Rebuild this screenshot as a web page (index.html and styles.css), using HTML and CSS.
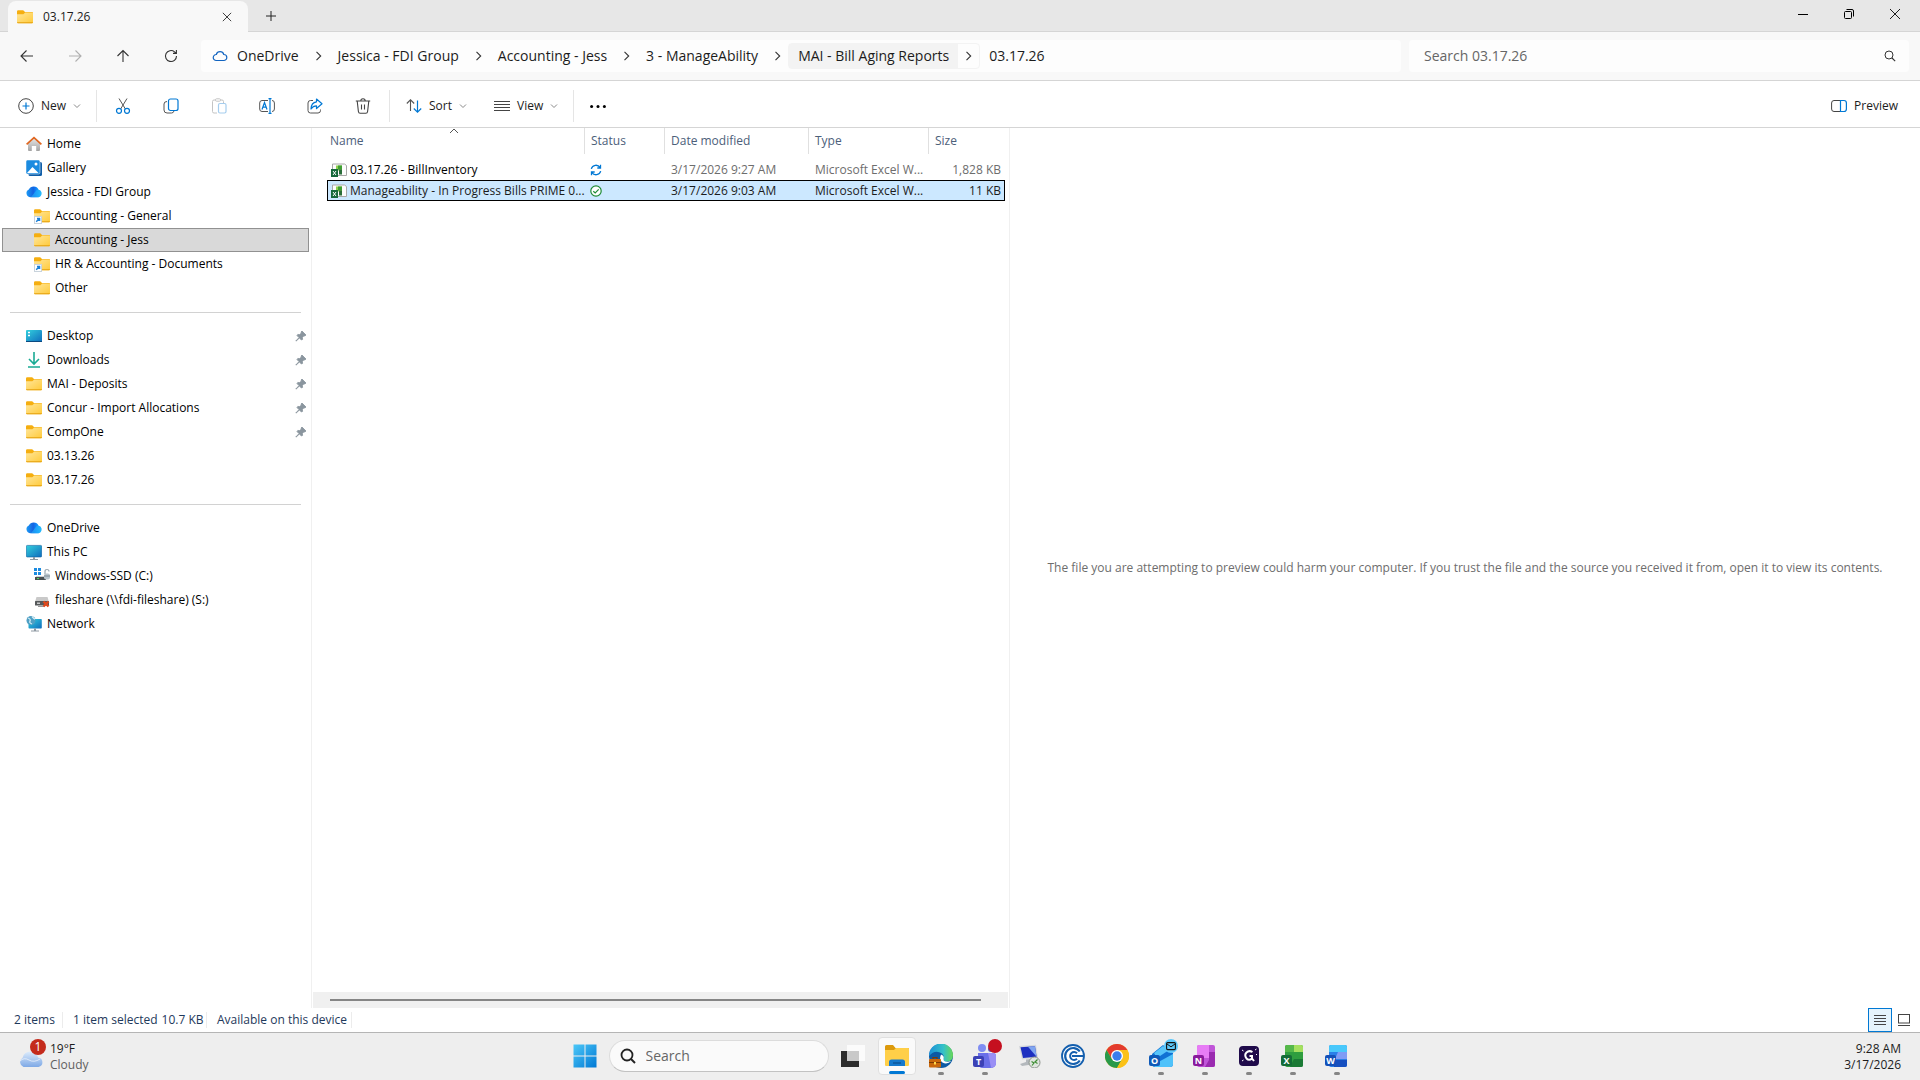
FILE: index.html
```html
<!DOCTYPE html>
<html lang="en">
<head>
<meta charset="UTF-8">
<meta name="viewport" content="width=device-width, initial-scale=1.0">
<title>03.17.26</title>
<link rel="stylesheet" href="styles.css">
</head>
<body>

<!-- shared icons -->
<svg class="sprite" aria-hidden="true">
    <defs>
        <linearGradient id="g-folder" x1="0" y1="0" x2="1" y2="1"><stop offset="0" stop-color="#ffe69b"/><stop offset="1" stop-color="#ffca3a"/></linearGradient>
        <linearGradient id="g-screen" x1="0" y1="0" x2="1" y2="1"><stop offset="0" stop-color="#33d0dd"/><stop offset="1" stop-color="#0f6cbd"/></linearGradient>
        <linearGradient id="g-cloud" x1="0" y1="0" x2="1" y2="0"><stop offset="0" stop-color="#1b9bf5"/><stop offset="0.45" stop-color="#1462e0"/><stop offset="0.6" stop-color="#0f7cf5"/><stop offset="1" stop-color="#2bc4fb"/></linearGradient>
        <linearGradient id="g-win" x1="0" y1="0" x2="1" y2="1"><stop offset="0" stop-color="#4cc8f8"/><stop offset="1" stop-color="#0078d4"/></linearGradient>
        <linearGradient id="g-home" x1="0" y1="0" x2="0" y2="1"><stop offset="0" stop-color="#e8e8e8"/><stop offset="1" stop-color="#a3a3a3"/></linearGradient>
    </defs>
    <symbol id="folder" viewBox="0 0 16 16">
        <path d="M0 2.5Q0 1.3 1.2 1.3H6.2L8 3H15Q16 3 16 4V8H0z" fill="#f5ae10"/>
        <path d="M0 5.2H6.4L8.2 3.4H15.2Q16 3.4 16 4.2V13.4Q16 14.2 15.2 14.2H.8Q0 14.2 0 13.4z" fill="url(#g-folder)"/>
        <path d="M0 13.2Q.2 14.3 1 14.3H15Q15.9 14.3 16 13.2z" fill="#e5a10e"/>
    </symbol>
    <symbol id="folder-link" viewBox="0 0 16 16">
        <use href="#folder" width="16" height="16"/>
        <rect x=".5" y="8.5" width="7" height="7" fill="#fff" stroke="#c9d3dc"/>
        <path d="M2.2 13.8L5.2 10.8M3 10.5H5.6V13" fill="none" stroke="#1a7fd6" stroke-width="1.4"/>
    </symbol>
    <symbol id="cloud" viewBox="0 0 16 16">
        <path d="M4 13.2A4 4 0 0 1 2.8 5.6 5.4 5.4 0 0 1 12.6 5.8 3.8 3.8 0 0 1 12.4 13.2z" fill="url(#g-cloud)"/>
        <path d="M5 13.2L9.6 7.2Q11.2 5.4 13 6A3.7 3.7 0 0 1 12.4 13.2z" fill="#25b6fb" opacity=".6"/>
    </symbol>
    <symbol id="pc" viewBox="0 0 16 16">
        <rect x=".3" y="1.4" width="15.4" height="11.6" rx="1" fill="url(#g-screen)" stroke="#0d609f" stroke-width=".6"/>
        <path d="M7 13H9V15H12V16H4V15H7z" fill="#8f9aa3"/>
    </symbol>
    <symbol id="pin" viewBox="0 0 12 12">
        <path d="M7 1L11 5 9.8 6 9 5.7 7.4 7.5 7.6 9.4 6.4 10 4.4 8 1 11.2.8 11 4 7.6 2 5.6 2.8 4.4 4.6 4.6 6.4 3 6 2z" fill="#8a959e" stroke="#8a959e" stroke-width=".8"/>
    </symbol>
    <symbol id="chev-right" viewBox="0 0 10 10"><path d="M3 .8L7.2 5 3 9.2" fill="none" stroke="#333" stroke-width="1.1"/></symbol>
    <symbol id="chev-down" viewBox="0 0 8 8"><path d="M1 2.5L4 5.5 7 2.5" fill="none" stroke="#8a8a8a"/></symbol>
    <symbol id="excel-file" viewBox="0 0 16 14">
        <path d="M1.500 1H13.500L15.500 2.500V12.500H1.500z" fill="#fdfdfd" stroke="#a8a8a8"/>
        <rect x="5" y="2.500" width="6" height="5" fill="#8fd14f"/>
        <rect x="7" y="2.500" width="4" height="4" fill="#3f9e34"/>
        <rect x="8" y="6.500" width="3" height="5" fill="#2a6e3a"/>
        <rect x="0" y="6" width="7" height="8" fill="#17693c"/>
        <path d="M2 8L5 12M5 8L2 12" stroke="#fff"/>
    </symbol>
    <symbol id="close" viewBox="0 0 12 12"><path d="M1 1L11 11M11 1L1 11" fill="none" stroke="#1c1c1c"/></symbol>
    <symbol id="lens" viewBox="0 0 12 12"><path d="M8 8L11.2 11.2" stroke="#333" stroke-width="1.1"/><circle cx="5" cy="5" r="4" fill="none" stroke="#333"/></symbol>
</svg>

<header class="titlebar">
    <div class="tab">
        <svg class="i16"><use href="#folder"/></svg>
        <span class="tab-title">03.17.26</span>
        <button class="plain tab-close" aria-label="Close tab"><svg class="i10"><use href="#close"/></svg></button>
    </div>
    <button class="plain new-tab" aria-label="New tab"><svg class="i12" viewBox="0 0 12 12"><path d="M6 1V11M1 6H11" stroke="#222"/></svg></button>
    <div class="window-controls">
        <button class="plain" aria-label="Minimize"><svg class="i12" viewBox="0 0 12 12"><path d="M1 6.5H11" stroke="#000"/></svg></button>
        <button class="plain" aria-label="Restore"><svg class="i12" viewBox="0 0 12 12"><path d="M3.5 1.5H9Q10.5 1.5 10.5 3V8.5" fill="none" stroke="#000"/><rect x="1.5" y="3.5" width="7" height="7" rx="1" fill="none" stroke="#000"/></svg></button>
        <button class="plain" aria-label="Close"><svg class="i12"><use href="#close"/></svg></button>
    </div>
</header>

<div class="navbar">
    <div class="nav-buttons">
        <button class="plain" aria-label="Back"><svg class="i14" viewBox="0 0 14 14"><path d="M13 7H1M6.5 1.5L1 7 6.5 12.5" fill="none" stroke="#333" stroke-width="1.1"/></svg></button>
        <button class="plain" aria-label="Forward" disabled><svg class="i14" viewBox="0 0 14 14"><path d="M1 7H13M7.500 1.500L13 7 7.500 12.500" fill="none" stroke="#b0b0b0" stroke-width="1.1"/></svg></button>
        <button class="plain" aria-label="Up"><svg class="i14" viewBox="0 0 14 14"><path d="M7 13V1.500M1.500 7L7 1.500 12.500 7" fill="none" stroke="#333" stroke-width="1.1"/></svg></button>
        <button class="plain" aria-label="Refresh"><svg class="i14" viewBox="0 0 14 14"><path d="M12.500 7A5.500 5.500 0 1 1 10.500 2.800L12.200 4.200M12.400 1V4.400H9" fill="none" stroke="#333" stroke-width="1.1"/></svg></button>
    </div>
    <nav class="breadcrumb" aria-label="Address">
        <svg class="i16" viewBox="0 0 16 16"><path d="M4.200 12.500A3 3 0 0 1 4.300 6.500 3.900 3.900 0 0 1 11.800 6.500 3 3 0 0 1 11.800 12.500z" fill="none" stroke="#1264c0" stroke-width="1.200"/></svg>
        <a href="#">OneDrive</a><svg class="crumb-arrow"><use href="#chev-right"/></svg>
        <a href="#">Jessica - FDI Group</a><svg class="crumb-arrow"><use href="#chev-right"/></svg>
        <a href="#">Accounting - Jess</a><svg class="crumb-arrow"><use href="#chev-right"/></svg>
        <a href="#">3 - ManageAbility</a><svg class="crumb-arrow"><use href="#chev-right"/></svg>
        <span class="crumb-hover"><a href="#">MAI - Bill Aging Reports</a><svg class="crumb-arrow"><use href="#chev-right"/></svg></span>
        <a href="#">03.17.26</a>
    </nav>
    <div class="search-box">
        <input type="text" aria-label="Search 03.17.26" placeholder="Search 03.17.26">
        <svg class="i12"><use href="#lens"/></svg>
    </div>
</div>

<div class="toolbar">
    <button class="tool tool-new">
        <svg class="i16" viewBox="0 0 16 16"><circle cx="8" cy="8" r="7.300" fill="none" stroke="#444"/><path d="M8 4.500V11.500M4.500 8H11.500" stroke="#0078d4" stroke-width="1.200"/></svg>
        New
        <svg class="i8"><use href="#chev-down"/></svg>
    </button>
    <span class="tool-sep"></span>
    <div class="tool-icons">
        <button class="plain" aria-label="Cut"><svg class="i16" viewBox="0 0 16 16"><path d="M4 .5L10.400 11M12 .5L5.600 11" stroke="#555" fill="none"/><circle cx="4" cy="12.800" r="2.500" fill="none" stroke="#0078d4" stroke-width="1.200"/><circle cx="12" cy="12.800" r="2.500" fill="none" stroke="#0078d4" stroke-width="1.200"/></svg></button>
        <button class="plain" aria-label="Copy"><svg class="i16" viewBox="0 0 16 16"><path d="M4 3.500Q1 3.500 1 6V12Q1 15 4 15H8.500Q10.500 15 11 13" fill="none" stroke="#555"/><rect x="5.500" y="1" width="9.500" height="11.500" rx="2" fill="none" stroke="#0078d4" stroke-width="1.200"/></svg></button>
        <button class="plain" aria-label="Paste" disabled><svg class="i16" viewBox="0 0 16 16"><path d="M6 15H3Q1.500 15 1.500 13.500V3.500Q1.500 2 3 2H11Q12.500 2 12.500 3.500V5" fill="none" stroke="#c4c4c4"/><rect x="4.500" y=".8" width="5" height="2.400" rx="1" fill="#fff" stroke="#c4c4c4"/><rect x="7.500" y="5.500" width="7.500" height="9.500" rx="1.500" fill="#fff" stroke="#a5cdee" stroke-width="1.200"/></svg></button>
        <button class="plain" aria-label="Rename"><svg class="i16" viewBox="0 0 16 16"><path d="M9 2.500H3Q.7 2.500.7 5V11Q.7 13.500 3 13.500H9M13 2.500Q15.400 2.500 15.400 5V11Q15.400 13.500 13 13.500" fill="none" stroke="#555"/><path d="M9.500.6H12.500M9.500 15.400H12.500M11 .6V15.400M3 11.500L5.500 4.500 8 11.500M3.800 9.200H7.200" fill="none" stroke="#0078d4" stroke-width="1.200"/></svg></button>
        <button class="plain" aria-label="Share"><svg class="i16" viewBox="0 0 16 16"><path d="M6 2.500H3.500Q1 2.500 1 5V12.500Q1 15 3.500 15H11Q13.500 15 13.500 12.500V11.500" fill="none" stroke="#555"/><path d="M9.500 1L15 5.800 9.500 10.500V7.800Q6 7.800 4 11 4.200 4.500 9.500 3.800z" fill="none" stroke="#0078d4" stroke-width="1.200" stroke-linejoin="round"/></svg></button>
        <button class="plain" aria-label="Delete"><svg class="i16" viewBox="0 0 16 16"><path d="M.8 3H15.200M5.800 3Q5.800.8 8 .8T10.200 3M2.200 3L3.400 13.500Q3.600 15.200 5.200 15.200H10.800Q12.400 15.200 12.600 13.500L13.800 3M6.500 6.500V11.500M9.500 6.500V11.500" fill="none" stroke="#444" stroke-width="1.100"/></svg></button>
    </div>
    <span class="tool-sep"></span>
    <button class="tool tool-sort">
        <svg class="i16" viewBox="0 0 16 16"><path d="M4.500 13V2M.8 5.500L4.500 1.800 8.200 5.500" fill="none" stroke="#555" stroke-width="1.100"/><path d="M11.500 2.500V14M7.800 10.500L11.500 14.200 15.200 10.500" fill="none" stroke="#0078d4" stroke-width="1.200"/></svg>
        Sort
        <svg class="i8"><use href="#chev-down"/></svg>
    </button>
    <button class="tool tool-view">
        <svg class="i16" viewBox="0 0 16 16"><path d="M0 3.500H16M0 6.500H16M0 9.500H16M0 12.500H16" stroke="#444"/></svg>
        View
        <svg class="i8"><use href="#chev-down"/></svg>
    </button>
    <span class="tool-sep"></span>
    <button class="plain tool-more" aria-label="More"><svg class="i16" viewBox="0 0 16 16"><circle cx="1.600" cy="8.500" r="1.500"/><circle cx="8" cy="8.500" r="1.500"/><circle cx="14.400" cy="8.500" r="1.500"/></svg></button>
    <button class="tool tool-preview">
        <svg class="i16" viewBox="0 0 16 16"><path d="M9.500 2.500H3Q.6 2.500.6 5V11Q.6 13.500 3 13.500H9.500" fill="none" stroke="#444"/><path d="M9.500 2.500H13Q15.400 2.500 15.400 5V11Q15.400 13.500 13 13.500H9.500z" fill="none" stroke="#0078d4" stroke-width="1.200"/></svg>
        Preview
    </button>
</div>

<main class="content">
    <nav class="sidebar" aria-label="Folders">
        <a class="side-item" href="#"><svg class="i16" viewBox="0 0 16 16"><path d="M2 7L8 2 14 7V14Q14 15 13 15H10.200V10H5.800V15H3Q2 15 2 14z" fill="url(#g-home)"/><path d="M.6 8.400L8 1.600 15.400 8.400" fill="none" stroke="#e0661f" stroke-width="1.700"/></svg>Home</a>
        <a class="side-item" href="#"><svg class="i16" viewBox="0 0 16 16"><rect x="2.500" y="2" width="13.500" height="14" rx="1.500" fill="#0f5ea8"/><rect x="0" y="0" width="14" height="14" rx="1.500" fill="#1b8be0" stroke="#fff" stroke-width=".5"/><path d="M1 13L6.500 7 12.500 13z" fill="#fff"/><circle cx="10" cy="4" r="1.500" fill="#fff"/></svg>Gallery</a>
        <a class="side-item" href="#"><svg class="i16"><use href="#cloud"/></svg>Jessica - FDI Group</a>
        <a class="side-item child" href="#"><svg class="i16"><use href="#folder-link"/></svg>Accounting - General</a>
        <a class="side-item child selected" href="#"><svg class="i16"><use href="#folder"/></svg>Accounting - Jess</a>
        <a class="side-item child" href="#"><svg class="i16"><use href="#folder-link"/></svg>HR &amp; Accounting - Documents</a>
        <a class="side-item child" href="#"><svg class="i16"><use href="#folder"/></svg>Other</a>
        <hr>
        <a class="side-item" href="#"><svg class="i16" viewBox="0 0 16 16"><rect x="0" y="2" width="16" height="12" rx="1" fill="url(#g-screen)"/><path d="M2 4.500H4M2 7.500H4" stroke="#fff" stroke-width="1.500"/><path d="M0 13H16V14H0z" fill="#0b4a80"/></svg>Desktop<svg class="pin"><use href="#pin"/></svg></a>
        <a class="side-item" href="#"><svg class="i16" viewBox="0 0 16 16"><path d="M8 0V11.500M3 7L8 12 13 7M2 15H14" fill="none" stroke="#1aab94" stroke-width="1.600"/></svg>Downloads<svg class="pin"><use href="#pin"/></svg></a>
        <a class="side-item" href="#"><svg class="i16"><use href="#folder"/></svg>MAI - Deposits<svg class="pin"><use href="#pin"/></svg></a>
        <a class="side-item" href="#"><svg class="i16"><use href="#folder"/></svg>Concur - Import Allocations<svg class="pin"><use href="#pin"/></svg></a>
        <a class="side-item" href="#"><svg class="i16"><use href="#folder"/></svg>CompOne<svg class="pin"><use href="#pin"/></svg></a>
        <a class="side-item" href="#"><svg class="i16"><use href="#folder"/></svg>03.13.26</a>
        <a class="side-item" href="#"><svg class="i16"><use href="#folder"/></svg>03.17.26</a>
        <hr>
        <a class="side-item" href="#"><svg class="i16"><use href="#cloud"/></svg>OneDrive</a>
        <a class="side-item" href="#"><svg class="i16"><use href="#pc"/></svg>This PC</a>
        <a class="side-item child" href="#"><svg class="i16" viewBox="0 0 16 16"><path d="M0 0H3V3H0zM4 0H7V3H4zM0 4H3V7H0zM4 4H7V7H4z" fill="#1c8be0"/><path d="M2 8.500H11L12 12H1z" fill="#9aa0a4"/><rect x="1" y="9" width="11" height="3" fill="#4a4f52"/><rect x="3" y="10" width="2" height="1" fill="#4ddb5a"/><path d="M11 6V3.500Q11 1.500 13 1.500T15 3.500" fill="none" stroke="#9aa7b0" stroke-width="1.200"/><rect x="10" y="5.500" width="6" height="6" rx="2" fill="#b9c4cc"/><path d="M10 8H16" stroke="#7f8c96"/></svg>Windows-SSD (C:)</a>
        <a class="side-item child" href="#"><svg class="i16" viewBox="0 0 16 16"><path d="M2.500 5H13.500L15 10H1z" fill="#c9c9c9"/><rect x="1" y="9" width="14" height="4.500" rx=".5" fill="#55585a"/><rect x="3" y="10.500" width="3" height="1.500" fill="#c9c9c9"/><path d="M4 14.500H10" stroke="#999"/><path d="M9.500 9.500L14.500 14.500M14.500 9.500L9.500 14.500" stroke="#e0481c" stroke-width="2.400"/></svg>fileshare (\\fdi-fileshare) (S:)</a>
        <a class="side-item" href="#"><svg class="i16" viewBox="0 0 16 16"><rect x="2.500" y="3" width="13.300" height="9.500" rx=".8" fill="url(#g-screen)"/><path d="M8 12.500H10V14.500H13V15.500H5V14.500H8z" fill="#8f9aa3"/><circle cx="5" cy="4.500" r="4.500" fill="#4f9fc4"/><path d="M2 2Q5 3 4 5T6 8M6 .5Q8 3 9 3" fill="none" stroke="#d3edf5" stroke-width="1.300"/></svg>Network</a>
    </nav>

    <section class="files">
        <table>
            <colgroup><col class="c-name"><col class="c-status"><col class="c-date"><col class="c-type"><col></colgroup>
            <thead>
                <tr>
                    <th>Name<svg class="sort-mark" viewBox="0 0 10 6"><path d="M1 5L5 1 9 5" fill="none" stroke="#555"/></svg></th>
                    <th>Status</th>
                    <th>Date modified</th>
                    <th>Type</th>
                    <th>Size</th>
                </tr>
            </thead>
            <tbody>
                <tr>
                    <td><span class="file-name"><svg class="file-icon"><use href="#excel-file"/></svg>03.17.26 - BillInventory</span></td>
                    <td class="state"><svg class="i12" viewBox="0 0 12 12"><path d="M1.300 4.800A4.800 4.800 0 0 1 10 3.500M10.500.8V4H7.300M10.700 7.200A4.800 4.800 0 0 1 2 8.500M1.500 11.200V8H4.700" fill="none" stroke="#0078d4" stroke-width="1.300"/></svg></td>
                    <td>3/17/2026 9:27 AM</td>
                    <td>Microsoft Excel W...</td>
                    <td class="size">1,828 KB</td>
                </tr>
                <tr class="selected">
                    <td><span class="file-name"><svg class="file-icon"><use href="#excel-file"/></svg>Manageability - In Progress Bills PRIME 0...</span></td>
                    <td class="state"><svg class="i12" viewBox="0 0 12 12"><circle cx="6" cy="6" r="5.200" fill="#fff" stroke="#1f8b34" stroke-width="1.200"/><path d="M3.300 6.200L5.200 8 8.700 4.400" fill="none" stroke="#1f8b34" stroke-width="1.200"/></svg></td>
                    <td>3/17/2026 9:03 AM</td>
                    <td>Microsoft Excel W...</td>
                    <td class="size">11 KB</td>
                </tr>
            </tbody>
        </table>
        <div class="scrollbar"><div class="scroll-thumb"></div></div>
    </section>

    <section class="preview">
        <p>The file you are attempting to preview could harm your computer. If you trust the file and the source you received it from, open it to view its contents.</p>
    </section>
</main>

<footer class="statusbar">
    <span class="status-count">2 items</span>
    <span class="status-selected">1 item selected<span>10.7 KB</span></span>
    <span class="status-device">Available on this device</span>
    <div class="view-buttons">
        <button class="plain active" aria-label="Details view"><svg class="i12" viewBox="0 0 12 12"><path d="M0 1.500H12M0 4.500H12M0 7.500H12M0 10.500H12" stroke="#444"/></svg></button>
        <button class="plain" aria-label="Large icons view"><svg class="i12" viewBox="0 0 12 12"><rect x=".5" y=".5" width="11" height="8.500" fill="none" stroke="#444"/><path d="M0 11.500H12" stroke="#444"/></svg></button>
    </div>
</footer>

<div class="taskbar">
    <button class="weather">
        <svg class="weather-icon" viewBox="0 0 28 26"><defs><linearGradient id="g-weather" x1="0" y1="0" x2="0" y2="1"><stop offset="0" stop-color="#dcebfb"/><stop offset="1" stop-color="#7ea9e6"/></linearGradient></defs><path d="M5.500 23A5 5 0 0 1 4.500 14Q6 7.500 12.500 7.500T20 13.500A4.800 4.800 0 0 1 20.500 23z" fill="url(#g-weather)"/><path d="M2 17Q6 13 11 16T22 15" fill="none" stroke="#fff" opacity=".6"/></svg>
        <span class="badge">1</span>
        <span class="weather-text">19°F<small>Cloudy</small></span>
    </button>

    <div class="apps">
        <button class="app" aria-label="Start"><svg class="i24" viewBox="0 0 24 24"><path d="M.5.500H11.500V11.500H.5zM12.500.500H23.500V11.500H12.500zM.5 12.500H11.500V23.500H.5zM12.500 12.500H23.500V23.500H12.500z" fill="url(#g-win)"/></svg></button>
        <label class="task-search">
            <svg class="i16" viewBox="0 0 16 16"><circle cx="7" cy="7" r="5.500" fill="none" stroke="#222" stroke-width="1.800"/><path d="M11 11L15 15" stroke="#222" stroke-width="2"/></svg>
            <input type="text" aria-label="Search" placeholder="Search">
        </label>
        <button class="app" aria-label="Task view"><svg class="i24" viewBox="0 0 24 24"><rect x="0" y="7" width="18" height="16" fill="#2b2b2b"/><rect x="6" y="1" width="18" height="16" fill="#fff" opacity=".75"/></svg></button>
        <button class="app current" aria-label="File Explorer"><svg class="i24" viewBox="0 0 24 24"><path d="M0 2.500Q0 1 1.500 1H8L10.500 4H23Q24 4 24 5V10H0z" fill="#dc9a0c"/><path d="M0 6H9L11 4H23Q24 4 24 5V21Q24 22 23 22H1Q0 22 0 21z" fill="#ffcf48"/><path d="M4 22V18Q4 15.500 6.500 15.500H17.500Q20 15.500 20 18V22z" fill="#1579cc"/><path d="M8 19H16" stroke="#0c5596" stroke-width="1.400"/></svg></button>
        <button class="app open" aria-label="Edge"><svg class="i24" viewBox="0 0 24 24"><defs><linearGradient id="g-edge" x1="0" y1="0" x2="1" y2="0"><stop offset="0" stop-color="#1b8fd8"/><stop offset=".6" stop-color="#35c1c8"/><stop offset="1" stop-color="#6ad955"/></linearGradient></defs><circle cx="12" cy="12" r="12" fill="#0c59a4"/><path d="M0 12A12 12 0 0 1 24 11Q24 17 18 17.500 13.500 17.500 14.500 14.500 15.500 12 13 9.500 6 5 0 12z" fill="url(#g-edge)"/><path d="M14.600 14.500Q14 18 19 17.700L22.500 17Q18 21 13.500 18.500 9.500 16 12 10.500 15.500 12 14.600 14.500z" fill="#fff"/><rect x="0" y="15" width="12" height="8.500" rx="1" fill="#c9680c"/><path d="M4 15V13.500H8V15M0 18.500H12" fill="none" stroke="#7a3a05" stroke-width="1.200"/><rect x="5" y="18" width="2" height="2.500" fill="#ffd84a"/></svg></button>
        <button class="app open" aria-label="Teams"><svg class="i24" viewBox="0 0 24 24"><circle cx="9" cy="4" r="4" fill="#7f8df2"/><circle cx="18" cy="5" r="3" fill="#5059c9"/><path d="M5 9H20Q23 9 23 12V19Q23 24 17 24H10Q5 24 5 18z" fill="#6a6fe8"/><path d="M15 9H20Q23 9 23 12V19Q23 23 18 23.800z" fill="#9a8ff5"/><rect x="0" y="12" width="11" height="11" rx="2" fill="#3b41b5"/><text x="5.500" y="21" class="glyph">T</text></svg><span class="dot-badge"></span></button>
        <button class="app" aria-label="Remote Desktop"><svg class="i24" viewBox="0 0 24 24"><path d="M2 2L19 .800 21 14 5 15.500z" fill="#d5d8db"/><path d="M3.500 3.200L18 2.200 19.600 12.800 6 14z" fill="#1c2fc0"/><path d="M11 2.700L18 2.200 19.600 12.800z" fill="#7fa5f0"/><path d="M9 15.500L14 15V18L18 20 5 22 3 20 9 18z" fill="#b3b8bc"/><circle cx="17.500" cy="18.500" r="5.500" fill="#dfe5df" stroke="#8c938c"/><path d="M14.500 17.500L17 19 15 21.500M20.500 15.500L18 18 20.500 19.500" fill="none" stroke="#3e8f34" stroke-width="1.200"/></svg></button>
        <button class="app" aria-label="CompOne"><svg class="i24" viewBox="0 0 24 24"><circle cx="12" cy="12" r="11" fill="#fff" stroke="#145fae" stroke-width="1.800"/><path d="M18.800 7.500A8 8 0 1 0 18.800 16.500" fill="none" stroke="#145fae" stroke-width="2.200"/><path d="M23 12H11M16 9.200A4 4 0 1 0 16 14.800" fill="none" stroke="#145fae" stroke-width="2"/></svg></button>
        <button class="app" aria-label="Chrome"><svg class="i24" viewBox="0 0 24 24"><circle cx="12" cy="12" r="12" fill="#fbc117"/><path d="M1.600 6A12 12 0 0 1 22.400 6H12L6.800 15z" fill="#e33b2e"/><path d="M1.600 6A12 12 0 0 0 12 24L17.200 15 12 17 6.800 15z" fill="#28994a"/><path d="M12 6H22.400A12 12 0 0 1 12 24L17.200 15z" fill="#fbc117"/><circle cx="12" cy="12" r="6" fill="#fff"/><circle cx="12" cy="12" r="4.700" fill="#3b7ded"/></svg></button>
        <button class="app open" aria-label="Outlook"><svg class="i24" viewBox="0 0 24 24"><path d="M3 10L14 1 24 9V20Q24 23 21 23H6Q3 23 3 20z" fill="#1172d4"/><path d="M5 9L14 2 20 6 8 14z" fill="#58c5fa"/><path d="M4 21L24 10V20Q24 23 21 23H6z" fill="#4fc2fa"/><rect x="0" y="11" width="11" height="11" rx="2" fill="#0f5ab8"/><text x="5.500" y="20" class="glyph">O</text></svg><span class="mail-badge"><svg class="i10" viewBox="0 0 10 10"><rect x=".6" y="1.600" width="8.800" height="7" rx="1" fill="none" stroke="#111" stroke-width="1.100"/><path d="M1 3L5 5.800 9 3" fill="none" stroke="#111"/></svg></span></button>
        <button class="app open" aria-label="OneNote"><svg class="i24" viewBox="0 0 24 24"><rect x="4" y="1" width="18" height="22" rx="2" fill="#c055d8"/><path d="M4 3Q4 1 6 1H16V14H4z" fill="#e77cf5"/><path d="M16 8H22V21Q22 23 20 23H12L16 16z" fill="#9a2bb0"/><rect x="0" y="11" width="11" height="11" rx="2" fill="#8a1a9c"/><text x="5.500" y="20" class="glyph">N</text></svg></button>
        <button class="app open" aria-label="G app"><svg class="i24" viewBox="0 0 24 24"><rect x="2" y="2" width="20" height="20" rx="4" fill="#1f0a4a"/><path d="M15.500 8Q12 6 9.500 8.500T9.500 14.500Q12 17 15 14.500V12H12.500M15 14.500L17 17" fill="none" stroke="#fff" stroke-width="2"/><path d="M5 6L6.500 7M18 6L19.500 5M5 17L6.500 16M19 10.500H20" stroke="#fff"/></svg></button>
        <button class="app open" aria-label="Excel"><svg class="i24" viewBox="0 0 24 24"><rect x="4" y="1" width="18" height="22" rx="2" fill="#2f9e3f"/><path d="M4 3Q4 1 6 1H13V8H4z" fill="#55b84a"/><path d="M13 1H20Q22 1 22 3V8H13z" fill="#a5e05f"/><path d="M13 15H22V21Q22 23 20 23H9z" fill="#1b7a35"/><rect x="0" y="11" width="11" height="11" rx="2" fill="#146c37"/><text x="5.500" y="20" class="glyph">X</text></svg></button>
        <button class="app open" aria-label="Word"><svg class="i24" viewBox="0 0 24 24"><rect x="4" y="1" width="18" height="22" rx="2" fill="#2a7fe8"/><path d="M4 3Q4 1 6 1H20Q22 1 22 3V8H4z" fill="#49c8fb"/><path d="M13 8H22V15H10z" fill="#7f9cf5"/><path d="M9 16H22V21Q22 23 20 23H9z" fill="#164fc0"/><rect x="0" y="11" width="11" height="11" rx="2" fill="#1450b8"/><text x="5.500" y="20" class="glyph">W</text></svg></button>
    </div>

    <div class="clock"><span>9:28 AM</span><span>3/17/2026</span></div>
</div>

</body>
</html>
```

FILE: styles.css
```css
* {
    box-sizing: border-box;
}

body {
    margin: 0;
    min-height: 100vh;
    display: flex;
    flex-direction: column;
    font-family: "Open Sans", "Noto Sans", sans-serif;
    font-size: 12px;
    line-height: 16px;
    color: #1c1c1c;
    background: #fff;
}

a {
    color: inherit;
    text-decoration: none;
}

button, input {
    font: inherit;
    color: inherit;
}

button {
    border: none;
    background: none;
    padding: 0;
}

svg {
    display: block;
    flex: none;
}

.sprite {
    position: absolute;
    width: 0;
    height: 0;
}

.i8 { width: 8px; height: 8px; }
.i10 { width: 10px; height: 10px; }
.i12 { width: 12px; height: 12px; }
.i14 { width: 14px; height: 14px; }
.i16 { width: 16px; height: 16px; }
.i24 { width: 24px; height: 24px; }

.plain {
    display: flex;
    align-items: center;
    justify-content: center;
}

/* title bar */
.titlebar {
    display: flex;
    height: 32px;
    padding-left: 8px;
    background: #e7e7e7;
    border-bottom: 1px solid #d5d5d5;
}

.tab {
    display: flex;
    align-items: center;
    width: 240px;
    height: 31px;
    margin-top: 1px;
    padding: 0 11px 0 9px;
    background: #f8f8f8;
    border-radius: 8px 8px 0 0;
}

.tab-title {
    margin-left: 10px;
}

.tab-close {
    width: 20px;
    height: 20px;
    margin-left: auto;
}

.new-tab {
    width: 46px;
}

.window-controls {
    display: flex;
    margin-left: auto;
    padding-right: 2px;
}

.window-controls button {
    width: 46px;
    height: 28px;
}

/* address row */
.navbar {
    display: flex;
    align-items: center;
    height: 49px;
    padding-right: 11px;
    background: #f8f8f8;
    border-bottom: 1px solid #d5d5d5;
    font-size: 14px;
}

.nav-buttons {
    display: flex;
    width: 201px;
    padding-left: 3px;
}

.nav-buttons button {
    width: 48px;
    height: 32px;
}

.breadcrumb {
    flex: 1;
    display: flex;
    align-items: center;
    height: 32px;
    padding-left: 11px;
    background: #fdfdfd;
    border-radius: 4px;
}

.breadcrumb a {
    padding: 4px 9px;
}

.crumb-arrow {
    width: 21px;
    height: 10px;
}

.crumb-hover {
    display: flex;
    align-items: center;
    border: 1px solid #f3f3f3;
    border-radius: 4px;
}

.crumb-hover a {
    background: #f3f3f3;
}

.search-box {
    display: flex;
    align-items: center;
    width: 500px;
    height: 32px;
    margin-left: 8px;
    padding: 0 13px 0 15px;
    background: #fdfdfd;
    border-radius: 4px;
}

.search-box input {
    flex: 1;
    min-width: 0;
    padding: 0;
    border: none;
    outline: none;
    background: none;
}

input::placeholder {
    color: #666;
    opacity: 1;
}

/* command bar */
.toolbar {
    display: flex;
    align-items: center;
    height: 47px;
    padding: 3px 22px 0 18px;
    border-bottom: 1px solid #d5d5d5;
}

.tool {
    display: flex;
    align-items: center;
    gap: 7px;
}

.tool-new {
    width: 78px;
}

.tool-sep {
    width: 1px;
    height: 32px;
    background: #e5e5e5;
}

.tool-icons {
    display: flex;
    padding: 0 2px;
}

.tool-icons button {
    width: 48px;
    height: 32px;
}

.tool-sort {
    width: 104px;
    padding-left: 16px;
}

.tool-view {
    width: 79px;
}

.tool-more {
    width: 48px;
    height: 32px;
}

.tool-preview {
    margin-left: auto;
}

/* main area */
.content {
    flex: 1;
    display: flex;
}

.sidebar {
    width: 312px;
    padding: 4px 2px;
    border-right: 1px solid #f0f0f0;
}

.side-item {
    display: flex;
    align-items: center;
    gap: 5px;
    height: 24px;
    padding-left: 23px;
    padding-right: 1px;
    border: 1px solid transparent;
    color: #000;
}

.side-item.child {
    padding-left: 31px;
}

.side-item.selected {
    background: #d9d9d9;
    border-color: #919191;
}

.sidebar hr {
    height: 1px;
    margin: 12px 8px 11px;
    border: none;
    background: #d2d2d2;
}

.pin {
    width: 12px;
    height: 12px;
    margin-left: auto;
}

.files {
    display: flex;
    flex-direction: column;
    width: 698px;
    border-right: 1px solid #f0f0f0;
}

.files table {
    table-layout: fixed;
    width: 678px;
    margin-left: 15px;
    border-spacing: 0;
}

.c-name { width: 258px; }
.c-status { width: 80px; }
.c-date { width: 144px; }
.c-type { width: 120px; }

.files th {
    position: relative;
    height: 26px;
    padding: 0 6px;
    border-right: 1px solid #e0e0e0;
    text-align: left;
    font-weight: normal;
    color: #4c607a;
}

.files th:first-child {
    padding-left: 3px;
}

.files th:last-child {
    border-right: none;
}

.sort-mark {
    position: absolute;
    top: 0;
    left: 122px;
    width: 10px;
    height: 6px;
}

.files tbody::before {
    content: "";
    display: block;
    height: 5px;
}

.files td {
    height: 21px;
    padding: 0 4px 0 6px;
    color: #6d6d6d;
    white-space: nowrap;
}

.files td:first-child {
    padding: 0 0 0 4px;
    color: #000;
}

.files td.state {
    padding-left: 5px;
}

.files td.size {
    text-align: right;
}

.files tr.selected {
    background: #cce8ff;
    outline: 1px solid #000;
    outline-offset: -1px;
}

.files tr.selected td {
    color: #1c1c1c;
}

.file-name {
    display: flex;
    align-items: center;
    gap: 3px;
}

.file-icon {
    width: 16px;
    height: 14px;
}

.scrollbar {
    height: 16px;
    margin: auto 1px 0;
    padding: 7px 27px 7px 17px;
    background: #f0f0f0;
}

.scroll-thumb {
    height: 2px;
    background: #858585;
}

.preview {
    flex: 1;
    display: flex;
    align-items: center;
    justify-content: center;
    color: #6d6d6d;
}

.preview p {
    margin: 0;
}

/* status bar */
.statusbar {
    display: flex;
    align-items: center;
    height: 24px;
    padding: 0 4px 0 14px;
    color: #1e395b;
}

.statusbar > span {
    margin-right: 10px;
    border-right: 1px solid #ececec;
}

.status-count {
    width: 49px;
}

.status-selected {
    width: 134px;
}

.status-selected span {
    margin-left: 4px;
}

.status-device {
    width: 135px;
}

.view-buttons {
    display: flex;
    margin-left: auto;
}

.view-buttons button {
    width: 24px;
    height: 24px;
}

.view-buttons .active {
    background: #e5f3fb;
    border: 1px solid #0078d4;
}

/* taskbar */
.taskbar {
    display: grid;
    grid-template-columns: 1fr auto 1fr;
    align-items: center;
    height: 48px;
    background: #eee;
    border-top: 1px solid #b5b5b5;
}

.weather {
    position: relative;
    display: flex;
    align-items: center;
    gap: 4px;
    padding-left: 18px;
    text-align: left;
}

.weather-icon {
    width: 28px;
    height: 26px;
}

.weather-text small {
    display: block;
    font-size: 12px;
    color: #606060;
}

.badge {
    position: absolute;
    top: -2px;
    left: 30px;
    width: 16px;
    height: 16px;
    border-radius: 50%;
    background: #c42b1c;
    color: #fff;
    text-align: center;
}

.apps {
    display: flex;
    align-items: center;
    padding: 0 0 1px 1px;
}

.app {
    position: relative;
    display: flex;
    align-items: center;
    justify-content: center;
    width: 44px;
    height: 38px;
}

.app.current {
    width: 38px;
    margin: 0 3px;
    background: #fafafa;
    border: 1px solid #e0e0e0;
    border-radius: 4px;
}

.app.open::after, .app.current::after {
    content: "";
    position: absolute;
    bottom: 0;
    left: 50%;
    width: 6px;
    height: 3px;
    margin-left: -3px;
    border-radius: 2px;
    background: #858585;
}

.app.current::after {
    width: 16px;
    margin-left: -8px;
    background: #0078d4;
}

.glyph {
    font-size: 9px;
    font-weight: bold;
    text-anchor: middle;
    fill: #fff;
}

.dot-badge, .mail-badge {
    position: absolute;
    top: 2px;
    right: 5px;
    width: 14px;
    height: 14px;
    border-radius: 50%;
    background: #c50f1f;
}

.mail-badge {
    display: flex;
    align-items: center;
    justify-content: center;
    background: #5ec8fa;
}

.task-search {
    display: flex;
    align-items: center;
    gap: 10px;
    width: 220px;
    height: 32px;
    margin: 0 2px;
    padding: 0 10px;
    background: #fafafa;
    border: 1px solid #dcdcdc;
    border-bottom-color: #c2c2c2;
    border-radius: 16px;
    font-size: 14px;
}

.task-search input {
    flex: 1;
    min-width: 0;
    padding: 0;
    border: none;
    outline: none;
    background: none;
}

.clock {
    display: flex;
    flex-direction: column;
    padding-right: 19px;
    text-align: right;
}
```
